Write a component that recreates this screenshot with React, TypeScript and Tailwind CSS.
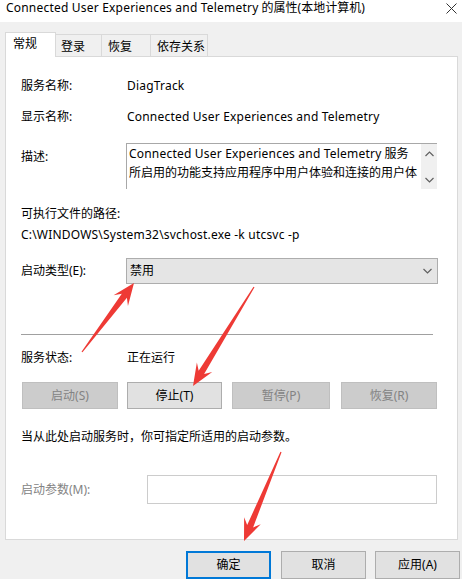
import React from 'react';

// tapered red arrow from a thin tail to a barbed head
const arrowPoints = (tx: number, ty: number, px: number, py: number) => {
    const len = Math.hypot(px - tx, py - ty);
    const dx = (px - tx) / len;
    const dy = (py - ty) / len;
    const nx = -dy;
    const ny = dx;
    const hl = 22;
    const hw = 9;
    const sw = 3.2;
    const pts: [number, number][] = [
        [tx + nx * 0.6, ty + ny * 0.6],
        [px - dx * (hl - 6) + nx * sw, py - dy * (hl - 6) + ny * sw],
        [px - dx * hl + nx * hw, py - dy * hl + ny * hw],
        [px, py],
        [px - dx * hl - nx * hw, py - dy * hl - ny * hw],
        [px - dx * (hl - 6) - nx * sw, py - dy * (hl - 6) - ny * sw],
        [tx - nx * 0.6, ty - ny * 0.6],
    ];
    return pts.map(p => p.join(',')).join(' ');
};

const Chevron: React.FC<{ up?: boolean; className?: string }> = ({ up, className }) => (
    <svg width="9" height="6" viewBox="0 0 9 6" className={className}>
        <path d={up ? 'M0.5 5 L4.5 1 L8.5 5' : 'M0.5 1 L4.5 5 L8.5 1'} fill="none" stroke="#606060" strokeWidth="1.2" />
    </svg>
);

// latin runs are a touch wider in the original UI font
const L: React.FC<{ children: React.ReactNode }> = ({ children }) => (
    <span className="tracking-[0.2px]">{children}</span>
);

const App: React.FC = () => {
    return (
        <div className="relative h-[579px] w-[462px] overflow-hidden bg-[#f0f0f0] font-['Noto_Sans','Noto_Sans_CJK_SC',sans-serif] text-[12px] leading-[18px] text-black">
            {/* title bar */}
            <div className="flex h-[22px] justify-between bg-white pl-[6px] pr-[5px]">
                <span className="leading-[16px] whitespace-nowrap"><L>Connected User Experiences and Telemetry</L> 的属性(本地计算机)</span>
                <svg width="11" height="11" viewBox="0 0 11 11" className="mt-[3px]">
                    <path d="M0.5 0.5 L10.5 10.5 M10.5 0.5 L0.5 10.5" stroke="#333" strokeWidth="1" />
                </svg>
            </div>

            {/* tabs */}
            <div className="flex h-[24px] items-start px-[5px] mt-[10px]">
                <div className="relative z-10 h-[25px] w-[51px] border-l border-r border-t border-[#d9d9d9] bg-white pl-[7px] pt-[2px]">常规</div>
                <div className="mt-[2px] h-[22px] w-[46px] border-r border-t border-[#d9d9d9] pl-[5px] pt-[3px]">登录</div>
                <div className="mt-[2px] h-[22px] w-[49px] border-r border-t border-[#d9d9d9] pl-[6px] pt-[3px]">恢复</div>
                <div className="mt-[2px] h-[22px] w-[57px] border-r border-t border-[#d9d9d9] pl-[6px] pt-[3px]">依存关系</div>
            </div>

            {/* general page */}
            <div className="mx-[5px] flex h-[484px] w-[453px] flex-col border border-[#d9d9d9] bg-white px-[15px]">
                <div className="mt-[20px] flex h-[18px] items-center">
                    <span className="w-[106px]">服务名称:</span>
                    <L>DiagTrack</L>
                </div>
                <div className="mt-[13px] flex h-[18px] items-center">
                    <span className="w-[106px]">显示名称:</span>
                    <span className="whitespace-nowrap"><L>Connected User Experiences and Telemetry</L></span>
                </div>
                <div className="mt-[17px] flex">
                    <span className="w-[105px] pt-[5px]">描述:</span>
                    <div className="flex h-[46px] w-[311px] border-l border-t border-[#a8a8a8]">
                        <div className="flex-1 overflow-hidden whitespace-nowrap pl-[2px] leading-[19px]">
                            <div><L>Connected User Experiences and Telemetry</L> 服务</div>
                            <div>所启用的功能支持应用程序中用户体验和连接的用户体</div>
                        </div>
                        <div className="flex w-[16px] flex-col items-center justify-between bg-[#f0f0f0] pb-[6px] pt-[7px]">
                            <Chevron up />
                            <Chevron />
                        </div>
                    </div>
                </div>
                <div className="mt-[16px] h-[18px]">可执行文件的路径:</div>
                <div className="mt-[3px] h-[18px] whitespace-nowrap"><L>C:\WINDOWS\System32\svchost.exe -k utcsvc -p</L></div>
                <div className="mt-[14px] flex h-[26px] items-center">
                    <span className="w-[105px]">启动类型(E):</span>
                    <div className="flex h-[26px] w-[312px] items-center justify-between border border-[#adadad] bg-[#e5e5e5] pl-[3px] pr-[5px]">
                        <span>禁用</span>
                        <Chevron />
                    </div>
                </div>
                <div className="mt-[50px] h-px w-[412px] bg-[#a0a0a0]" />
                <div className="mt-[14px] flex h-[18px] items-center">
                    <span className="w-[106px]">服务状态:</span>
                    <span>正在运行</span>
                </div>
                <div className="mt-[15px] flex h-[27px]">
                    <div className="ml-[1px] flex w-[96px] items-center justify-center border border-[#bfbfbf] bg-[#cccccc] text-[#838383]">启动(S)</div>
                    <div className="ml-[9px] flex w-[95px] items-center justify-center border border-[#adadad] bg-[#e1e1e1]">停止(T)</div>
                    <div className="ml-[10px] flex w-[98px] items-center justify-center border border-[#bfbfbf] bg-[#cccccc] text-[#838383]">暂停(P)</div>
                    <div className="ml-[11px] flex w-[96px] items-center justify-center border border-[#bfbfbf] bg-[#cccccc] text-[#838383]">恢复(R)</div>
                </div>
                <div className="mt-[19px] h-[18px] whitespace-nowrap">当从此处启动服务时，你可指定所适用的启动参数。</div>
                <div className="mt-[29px] flex h-[29px] items-center">
                    <span className="w-[126px] text-[#838383]">启动参数(M):</span>
                    <div className="h-[29px] w-[290px] border border-[#cccccc] bg-white" />
                </div>
            </div>

            {/* dialog buttons */}
            <div className="mt-[11px] flex h-[28px]">
                <div className="ml-[186px] flex w-[85px] items-center justify-center border-2 border-[#0078d7] bg-[#e1e1e1]">确定</div>
                <div className="ml-[10px] flex w-[85px] items-center justify-center border border-[#adadad] bg-[#e1e1e1]">取消</div>
                <div className="ml-[9px] flex w-[85px] items-center justify-center border border-[#adadad] bg-[#e1e1e1]">应用(A)</div>
            </div>

            {/* annotation arrows */}
            <svg className="pointer-events-none absolute inset-0" width="462" height="579">
                <polygon points={arrowPoints(82, 352, 134, 283)} fill="#ee3a35" />
                <polygon points={arrowPoints(254, 287, 193, 386)} fill="#ee3a35" />
                <polygon points={arrowPoints(281, 452, 244, 541)} fill="#ee3a35" />
            </svg>
        </div>
    );
};

export default App;
